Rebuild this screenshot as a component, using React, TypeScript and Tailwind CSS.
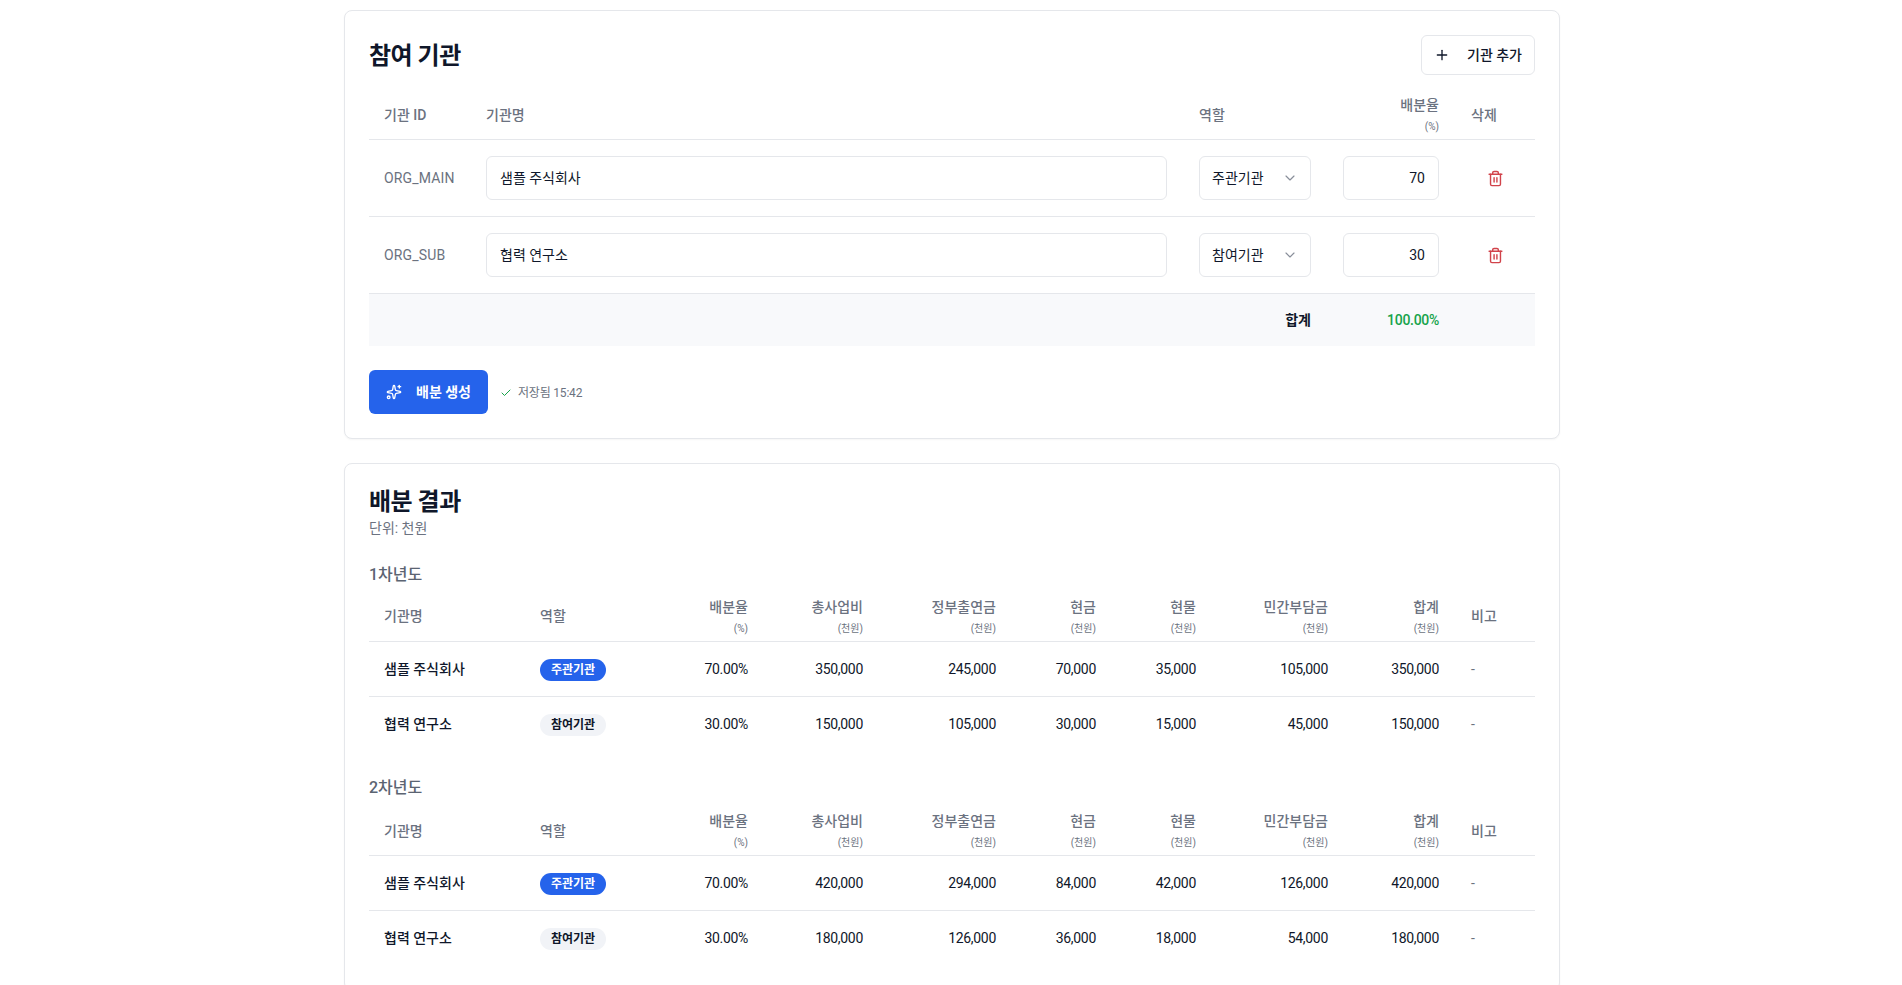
import { Plus, ChevronDown, Trash2, Check, Sparkles } from "lucide-react";

const FONT = "font-['Roboto','Noto_Sans_CJK_KR',sans-serif]";

function Unit({ children }: { children: React.ReactNode }) {
  return <span className="block text-[10px] leading-[15px] mt-[4px] font-normal text-[#6b7280]">{children}</span>;
}

function Org({ id, name, role, share }: { id: string; name: string; role: string; share: string }) {
  return (
    <tr className="border-b border-[#e5e7eb]">
      <td className="pl-[15px] pr-4 py-4 text-sm tracking-[0.15px] text-[#6b7280]">{id}</td>
      <td className="px-4 py-4">
        <div className="h-11 border border-[#e5e7eb] rounded-md bg-white px-[13px] flex items-center text-sm text-[#0f172a]">{name}</div>
      </td>
      <td className="px-4 py-4">
        <div className="h-11 border border-[#e5e7eb] rounded-md bg-white pl-3 pr-3 flex items-center justify-between text-sm text-[#0f172a]">
          <span>{role}</span>
          <ChevronDown className="w-4 h-4 text-[#6b7280] opacity-80" strokeWidth={1.75} />
        </div>
      </td>
      <td className="px-4 py-4">
        <div className="h-11 border border-[#e5e7eb] rounded-md bg-white px-[13px] flex items-center justify-end text-sm text-[#0f172a]">{share}</div>
      </td>
      <td className="px-4 py-4">
        <div className="flex justify-center">
          <Trash2 className="w-[17px] h-[17px] text-[#d1434b]" strokeWidth={2} />
        </div>
      </td>
    </tr>
  );
}

const rows1 = [
  ["샘플 주식회사", "주관기관", "70.00%", "350,000", "245,000", "70,000", "35,000", "105,000", "350,000"],
  ["협력 연구소", "참여기관", "30.00%", "150,000", "105,000", "30,000", "15,000", "45,000", "150,000"],
];
const rows2 = [
  ["샘플 주식회사", "주관기관", "70.00%", "420,000", "294,000", "84,000", "42,000", "126,000", "420,000"],
  ["협력 연구소", "참여기관", "30.00%", "180,000", "126,000", "36,000", "18,000", "54,000", "180,000"],
];
const heads: [string, string][] = [
  ["배분율", "(%)"],
  ["총사업비", "(천원)"],
  ["정부출연금", "(천원)"],
  ["현금", "(천원)"],
  ["현물", "(천원)"],
  ["민간부담금", "(천원)"],
  ["합계", "(천원)"],
];

function YearTable({ title, rows, first }: { title: string; rows: string[][]; first?: boolean }) {
  return (
    <section>
      <h3 className={first ? "text-base leading-6 font-medium text-[#5b6472] mb-[7px]" : "text-base leading-6 font-medium text-[#5b6472] mb-2"}>{title}</h3>
      <table className="w-full table-fixed border-collapse">
        <colgroup>
          <col className="w-[155px]" />
          <col className="w-[125px]" />
          <col className="w-[115px]" />
          <col className="w-[115px]" />
          <col className="w-[133px]" />
          <col className="w-[100px]" />
          <col className="w-[100px]" />
          <col className="w-[132px]" />
          <col className="w-[111px]" />
          <col className="w-[80px]" />
        </colgroup>
        <thead>
          <tr className="border-b border-[#e5e7eb]">
            <th className="pl-[15px] pr-4 pt-[3px] pb-[5px] text-left text-sm font-medium text-[#6b7280]">기관명</th>
            <th className="px-4 pt-[3px] pb-[5px] text-left text-sm font-medium text-[#6b7280]">역할</th>
            {heads.map(([h, u]) => (
              <th key={h} className="px-4 pt-[3px] pb-[5px] text-right text-sm font-medium text-[#6b7280]">
                {h}
                <Unit>{u}</Unit>
              </th>
            ))}
            <th className="px-4 pt-[3px] pb-[5px] text-left text-sm font-medium text-[#6b7280]">비고</th>
          </tr>
        </thead>
        <tbody>
          {rows.map((r, i) => (
            <tr key={r[0]} className={i < rows.length - 1 ? "h-[55px] border-b border-[#e5e7eb]" : "h-[55px]"}>
              <td className="pl-[15px] pr-4 text-sm font-medium text-[#0f172a]">{r[0]}</td>
              <td className="px-4">
                <span
                  className={
                    i === 0
                      ? "inline-flex items-center h-[22px] px-[11px] rounded-full bg-[#2563eb] text-white text-xs font-semibold"
                      : "inline-flex items-center h-[22px] px-[11px] rounded-full bg-[#f1f3f7] text-[#0f172a] text-xs font-semibold"
                  }
                >
                  {r[1]}
                </span>
              </td>
              {r.slice(2).map((c, j) => (
                <td key={j} className="px-4 text-right text-sm tracking-[-0.3px] text-[#0f172a]">{c}</td>
              ))}
              <td className="px-4 text-sm text-[#6b7280]">-</td>
            </tr>
          ))}
        </tbody>
      </table>
    </section>
  );
}

export default function App() {
  return (
    <div className={`${FONT} bg-white h-[985px] overflow-hidden`}>
      <div className="w-[1216px] ml-[344px] pt-[10px] flex flex-col gap-6">
        <div className="border border-[#e5e7eb] rounded-lg bg-white p-6 shadow-[0_1px_2px_rgba(0,0,0,0.04)]">
          <div className="flex items-center justify-between mb-[17px]">
            <h2 className="text-2xl font-semibold tracking-[-0.5px] text-[#0f172a] mt-[1px]">참여 기관</h2>
            <button className="h-10 w-[114px] border border-[#e5e7eb] rounded-md bg-white flex items-center justify-center gap-[17px] text-sm font-medium text-[#0f172a]">
              <Plus className="w-4 h-4" strokeWidth={2} />
              기관 추가
            </button>
          </div>
          <table className="w-full table-fixed border-collapse">
            <colgroup>
              <col className="w-[101px]" />
              <col className="w-[713px]" />
              <col className="w-[144px]" />
              <col className="w-[128px]" />
              <col className="w-[80px]" />
            </colgroup>
            <thead>
              <tr className="border-b border-[#e5e7eb]">
                <th className="pl-[15px] pr-4 pt-[3px] pb-[5px] text-left text-sm font-medium text-[#6b7280]">기관 ID</th>
                <th className="px-4 pt-[3px] pb-[5px] text-left text-sm font-medium text-[#6b7280]">기관명</th>
                <th className="px-4 pt-[3px] pb-[5px] text-left text-sm font-medium text-[#6b7280]">역할</th>
                <th className="px-4 pt-[3px] pb-[5px] text-right text-sm font-medium text-[#6b7280]">
                  배분율
                  <Unit>(%)</Unit>
                </th>
                <th className="px-4 pt-[3px] pb-[5px] text-left text-sm font-medium text-[#6b7280]">삭제</th>
              </tr>
            </thead>
            <tbody>
              <Org id="ORG_MAIN" name="샘플 주식회사" role="주관기관" share="70" />
              <Org id="ORG_SUB" name="협력 연구소" role="참여기관" share="30" />
              <tr className="h-[52px] bg-[#f8f9fb]">
                <td colSpan={3} className="px-4 text-right text-sm font-semibold text-[#0f172a]">합계</td>
                <td className="px-4 text-right text-sm font-medium tracking-[-0.3px] text-[#16a34a]">100.00%</td>
                <td />
              </tr>
            </tbody>
          </table>
          <div className="flex items-center gap-3 mt-6">
            <button className="h-11 w-[119px] rounded-md bg-[#2563eb] text-white text-sm font-semibold flex items-center justify-center gap-[14px]">
              <Sparkles className="w-4 h-4" strokeWidth={2} />
              배분 생성
            </button>
            <div className="flex items-center gap-[6px] pt-[2px] text-xs tracking-[-0.2px] text-[#6b7280]">
              <Check className="w-3 h-3 text-[#16a34a]" strokeWidth={2} />
              저장됨 15:42
            </div>
          </div>
        </div>
        <div className="border border-[#e5e7eb] rounded-lg bg-white p-6 shadow-[0_1px_2px_rgba(0,0,0,0.04)] flex flex-col">
          <h2 className="text-2xl leading-8 font-semibold tracking-[-0.5px] text-[#0f172a] -mt-[2px]">배분 결과</h2>
          <p className="text-sm text-[#6b7280] mb-[25px]">단위: 천원</p>
          <div className="flex flex-col gap-[25px]">
            <YearTable title="1차년도" rows={rows1} first />
            <YearTable title="2차년도" rows={rows2} />
          </div>
        </div>
      </div>
    </div>
  );
}
